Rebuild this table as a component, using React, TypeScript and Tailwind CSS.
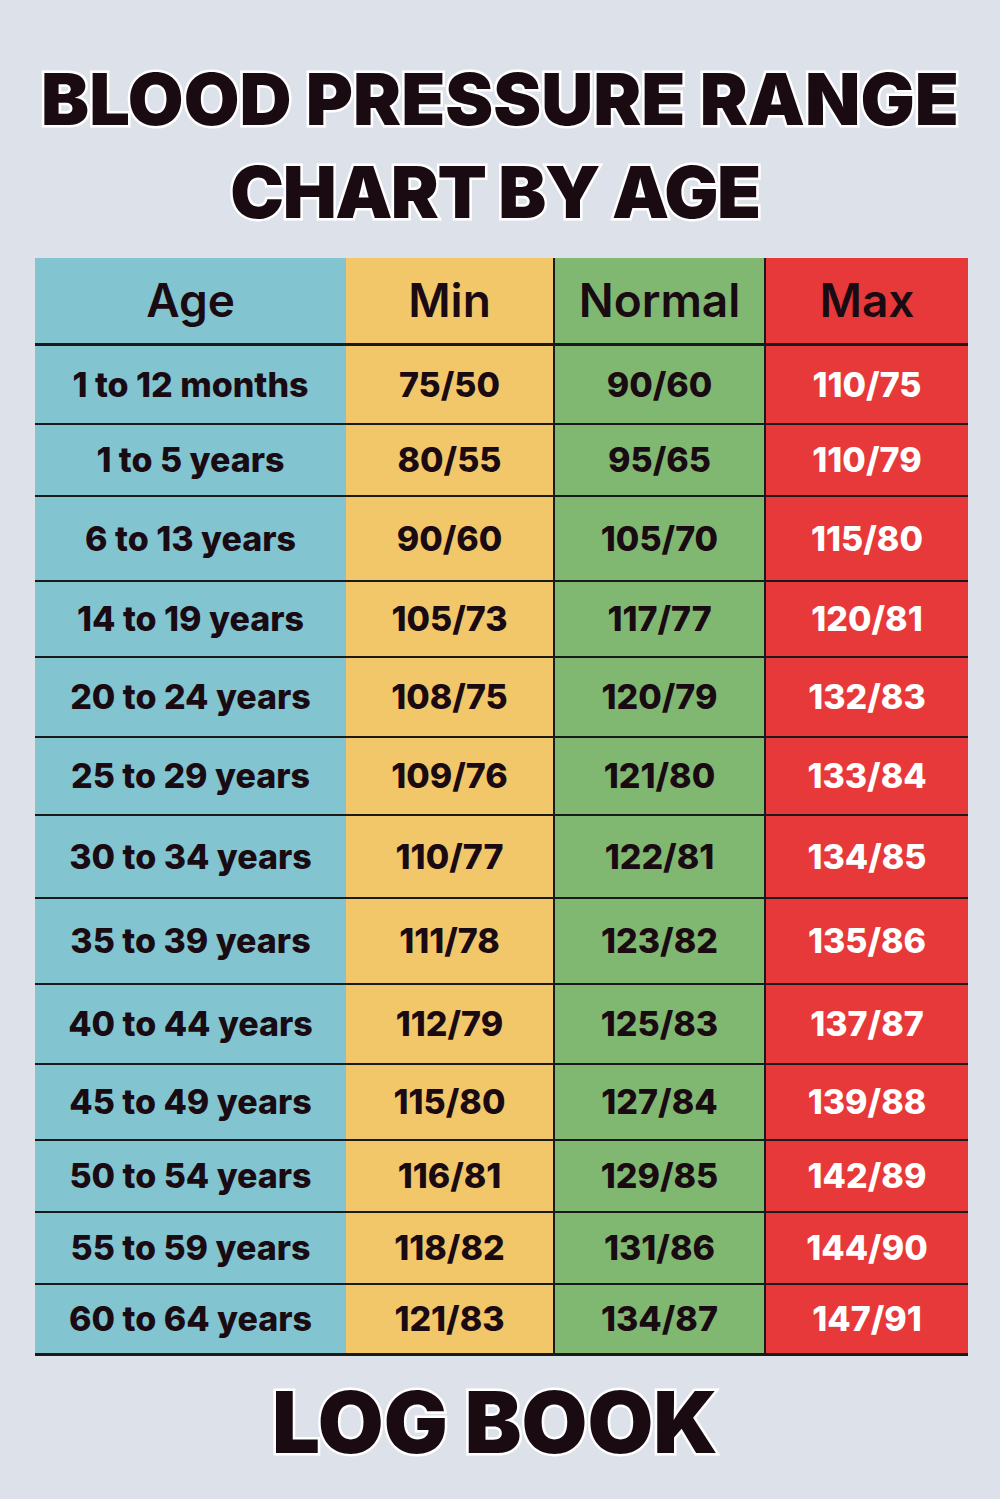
import React from "react";

const rows: { age: string; min: string; normal: string; max: string; h: string }[] = [
  { age: "1 to 12 months", min: "75/50", normal: "90/60", max: "110/75", h: "h-[79px]" },
  { age: "1 to 5 years", min: "80/55", normal: "95/65", max: "110/79", h: "h-[72px]" },
  { age: "6 to 13 years", min: "90/60", normal: "105/70", max: "115/80", h: "h-[85px]" },
  { age: "14 to 19 years", min: "105/73", normal: "117/77", max: "120/81", h: "h-[76px]" },
  { age: "20 to 24 years", min: "108/75", normal: "120/79", max: "132/83", h: "h-[80px]" },
  { age: "25 to 29 years", min: "109/76", normal: "121/80", max: "133/84", h: "h-[78px]" },
  { age: "30 to 34 years", min: "110/77", normal: "122/81", max: "134/85", h: "h-[83px]" },
  { age: "35 to 39 years", min: "111/78", normal: "123/82", max: "135/86", h: "h-[86px]" },
  { age: "40 to 44 years", min: "112/79", normal: "125/83", max: "137/87", h: "h-[80px]" },
  { age: "45 to 49 years", min: "115/80", normal: "127/84", max: "139/88", h: "h-[76px]" },
  { age: "50 to 54 years", min: "116/81", normal: "129/85", max: "142/89", h: "h-[72px]" },
  { age: "55 to 59 years", min: "118/82", normal: "131/86", max: "144/90", h: "h-[72px]" },
  { age: "60 to 64 years", min: "121/83", normal: "134/87", max: "147/91", h: "h-[71px]" },
];

const cell = "flex items-center justify-center text-[34px] font-extrabold tracking-[0px] leading-none";
const head = "flex items-center justify-center text-[46px] font-semibold";

export default function App() {
  return (
    <div
      className="w-[1000px] h-[1499px] bg-[#dde2ea] text-[#1a0b12] overflow-hidden"
      style={{ fontFamily: "Inter, 'Noto Sans', sans-serif" }}
    >
      <div className="pt-[52px] flex flex-col items-center">
        <h1 className="text-center text-[72px] leading-[93px] font-black [paint-order:stroke_fill] [-webkit-text-stroke:5px_white]">
          <div className="tracking-[0px]">BLOOD PRESSURE RANGE</div>
          <div className="-ml-[10px] tracking-[-1.5px]">CHART BY AGE</div>
        </h1>
      </div>

      <div className="mt-[20px] ml-[35px] w-[933px]">
        <div className="grid grid-cols-[311px_209px_211px_202px] h-[88px] border-b-[3px] border-[#1a1a1a]">
          <div className={`bg-[#82c5d0] ${head}`}>Age</div>
          <div className={`bg-[#f2c76a] border-r-2 border-[#1a1a1a] ${head}`}>Min</div>
          <div className={`bg-[#80b872] border-r-2 border-[#1a1a1a] ${head}`}>Normal</div>
          <div className={`bg-[#e8393a] ${head}`}>Max</div>
        </div>
        {rows.map((r, i) => (
          <div
            key={i}
            className={`grid grid-cols-[311px_209px_211px_202px] ${r.h} ${i === rows.length - 1 ? "border-b-[3px]" : "border-b-2"} border-[#1a1a1a]`}
          >
            <div className={`bg-[#82c5d0] ${cell}`}>{r.age}</div>
            <div className={`bg-[#f2c76a] border-r-2 border-[#1a1a1a] ${cell}`}>{r.min}</div>
            <div className={`bg-[#80b872] border-r-2 border-[#1a1a1a] ${cell}`}>{r.normal}</div>
            <div className={`bg-[#e8393a] text-white ${cell}`}>{r.max}</div>
          </div>
        ))}
      </div>

      <div className="mt-[17px] flex justify-center">
        <div className="text-[85px] leading-[100px] font-black tracking-[0px] -ml-[10px] [paint-order:stroke_fill] [-webkit-text-stroke:5px_white]">
          LOG BOOK
        </div>
      </div>
    </div>
  );
}
